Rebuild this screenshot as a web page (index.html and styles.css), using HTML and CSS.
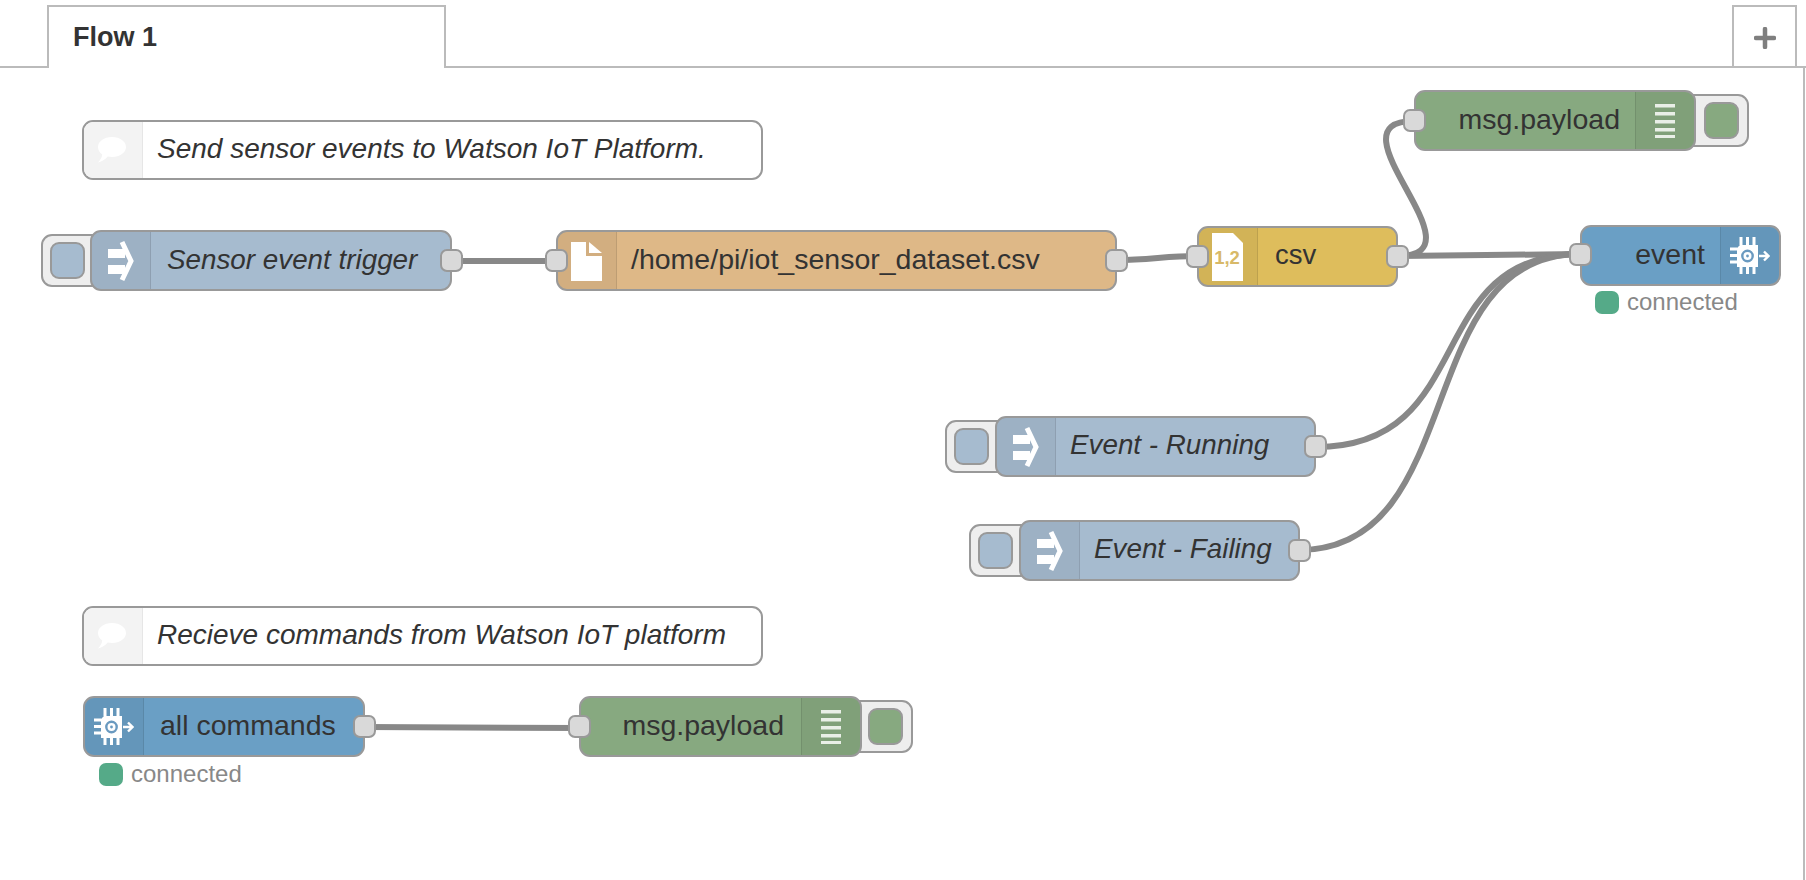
FILE: index.html
```html
<!DOCTYPE html>
<html lang="en">
    <head>
        <meta charset="UTF-8" />
        <title>Flow 1</title>
        <link rel="stylesheet" href="styles.css">
    </head>
    <body>
        <svg class="defs" width="0" height="0">
            <symbol id="icon-inject" viewBox="0 0 26 46">
                <rect x="0" y="11" width="17" height="9" fill="#fff" />
                <rect x="0" y="27" width="17" height="9" fill="#fff" />
                <path d="M14 4 L23 23 L14 42" fill="none" stroke="#fff" stroke-width="5" />
            </symbol>
            <symbol id="icon-file" viewBox="0 0 31 39">
                <path d="M0 0 H15 V14 H31 V39 H0 Z" fill="#fff" />
                <path d="M18 0 L31 11 H18 Z" fill="#fff" />
            </symbol>
            <symbol id="icon-debug" viewBox="0 0 20 34">
                <g fill="#e9efe7">
                    <rect y="0" width="20" height="3.5" />
                    <rect y="8" width="20" height="3.5" />
                    <rect y="16" width="20" height="3.5" />
                    <rect y="24" width="20" height="3.5" />
                    <rect y="31" width="20" height="3" />
                </g>
            </symbol>
            <symbol id="icon-chip" viewBox="0 0 40 37">
                <g fill="#fff">
                    <path d="M10 8 H28 V30 H7 V11 Z" />
                    <rect x="9.500" y="0" width="3" height="8" />
                    <rect x="16" y="0" width="3" height="8" />
                    <rect x="22.500" y="0" width="3" height="8" />
                    <rect x="9.500" y="30" width="3" height="7" />
                    <rect x="16" y="30" width="3" height="7" />
                    <rect x="22.500" y="30" width="3" height="7" />
                    <rect x="0" y="10.500" width="7" height="3" />
                    <rect x="0" y="17" width="7" height="3" />
                    <rect x="0" y="23.500" width="7" height="3" />
                </g>
                <circle cx="17.500" cy="19" r="5.200" fill="none" stroke="#6a9ac0" stroke-width="2.400" />
                <circle cx="17.500" cy="19" r="1.400" fill="#6a9ac0" />
                <path d="M29 19 H38 M34 14.500 L38.500 19 L34 23.500" fill="none" stroke="#fff" stroke-width="2.400" />
            </symbol>
            <symbol id="icon-comment" viewBox="0 0 28 26">
                <path d="M14 0 C22 0 28 4.500 28 10 C28 15.500 22 20 14 20 C12.500 20 11 19.800 9.800 19.500 C7 22.500 3 25 0 25.500 C2.500 23 4 20 4.300 17.500 C1.600 15.700 0 13 0 10 C0 4.500 6 0 14 0 Z" fill="#fff" />
            </symbol>
        </svg>

        <div class="tabs">
            <div class="tab">Flow 1</div>
            <div class="tab-add">
                <svg width="22" height="22" viewBox="0 0 22 22">
                    <path d="M11 2 V20 M2 11 H20" fill="none" stroke="#7f7f7f" stroke-width="4.500" stroke-linecap="round" />
                </svg>
            </div>
        </div>

        <div class="canvas">
            <svg class="wires" width="1803" height="812" viewBox="0 68 1803 812">
                <path d="M451 261 L556 261" />
                <path d="M1116 260 C1150 260 1165 256 1197 256" />
                <path d="M1398 256 C1488 256 1324 121 1414 121" />
                <path d="M1398 256 C1450 256 1530 254 1580 254" />
                <path d="M1316 447 C1480 447 1420 254 1580 254" />
                <path d="M1299 550 C1470 550 1410 254 1580 254" />
                <path d="M365 727 L579 728" />
            </svg>

            <div class="node comment comment-send">
                <div class="icon-box"><svg class="icon-speech"><use href="#icon-comment" /></svg></div>
                <div class="label">Send sensor events to Watson IoT Platform.</div>
            </div>

            <div class="trigger trigger-sensor"><span></span></div>
            <div class="node inject inject-sensor">
                <div class="icon-box"><svg class="icon-arrow"><use href="#icon-inject" /></svg></div>
                <div class="label italic">Sensor event trigger</div>
                <i class="port port-out"></i>
            </div>

            <div class="node file">
                <i class="port port-in"></i>
                <div class="icon-box"><svg class="icon-doc"><use href="#icon-file" /></svg></div>
                <div class="label">/home/pi/iot_sensor_dataset.csv</div>
                <i class="port port-out"></i>
            </div>

            <div class="node csv">
                <i class="port port-in"></i>
                <div class="icon-box">
                    <svg class="icon-csv" viewBox="0 0 31 48">
                        <path d="M0 0 H21 L31 10 V48 H0 Z" fill="#fff" />
                        <text x="15" y="31" text-anchor="middle">1,2</text>
                    </svg>
                </div>
                <div class="label">csv</div>
                <i class="port port-out"></i>
            </div>

            <div class="trigger-right trigger-debug-top"><span></span></div>
            <div class="node debug debug-top">
                <i class="port port-in"></i>
                <div class="label">msg.payload</div>
                <div class="icon-box"><svg class="icon-bars"><use href="#icon-debug" /></svg></div>
            </div>

            <div class="node watson watson-out">
                <i class="port port-in"></i>
                <div class="label">event</div>
                <div class="icon-box"><svg class="icon-chip"><use href="#icon-chip" /></svg></div>
            </div>
            <div class="status status-event"><span class="dot"></span>connected</div>

            <div class="trigger trigger-running"><span></span></div>
            <div class="node inject inject-running">
                <div class="icon-box"><svg class="icon-arrow"><use href="#icon-inject" /></svg></div>
                <div class="label italic">Event - Running</div>
                <i class="port port-out"></i>
            </div>

            <div class="trigger trigger-failing"><span></span></div>
            <div class="node inject inject-failing">
                <div class="icon-box"><svg class="icon-arrow"><use href="#icon-inject" /></svg></div>
                <div class="label italic">Event - Failing</div>
                <i class="port port-out"></i>
            </div>

            <div class="node comment comment-receive">
                <div class="icon-box"><svg class="icon-speech"><use href="#icon-comment" /></svg></div>
                <div class="label">Recieve commands from Watson IoT platform</div>
            </div>

            <div class="node watson watson-in">
                <div class="icon-box"><svg class="icon-chip"><use href="#icon-chip" /></svg></div>
                <div class="label">all commands</div>
                <i class="port port-out"></i>
            </div>
            <div class="status status-commands"><span class="dot"></span>connected</div>

            <div class="trigger-right trigger-debug-bottom"><span></span></div>
            <div class="node debug debug-bottom">
                <i class="port port-in"></i>
                <div class="label">msg.payload</div>
                <div class="icon-box"><svg class="icon-bars"><use href="#icon-debug" /></svg></div>
            </div>
        </div>
    </body>
</html>
```

FILE: styles.css
```css
html,
body {
    margin: 0;
    height: 880px;
    overflow: hidden;
    background: #fff;
    color: #333;
    font-family: "Liberation Sans", Arial, sans-serif;
}
.defs {
    display: block;
    height: 0;
}

/* tab bar */
.tabs {
    display: flex;
    box-sizing: border-box;
    height: 68px;
    padding: 5px 9px 0 47px;
    border-bottom: 2px solid #bbb;
}
.tab {
    box-sizing: border-box;
    width: 399px;
    height: 63px;
    padding: 0 0 0 24px;
    border: 2px solid #bbb;
    border-bottom: none;
    background: #fff;
    font-size: 27px;
    font-weight: bold;
    line-height: 60px;
}
.tab-add {
    display: flex;
    box-sizing: border-box;
    align-items: center;
    justify-content: center;
    width: 65px;
    height: 61px;
    margin-left: auto;
    padding-top: 2px;
    border: 2px solid #bbb;
    border-bottom: none;
}

/* canvas, nodes sit at their diagram position, page y minus 68 */
.canvas {
    position: relative;
    box-sizing: border-box;
    width: 1805px;
    height: 812px;
    border-right: 2px solid #bbb;
}
.wires {
    position: absolute;
    left: 0;
    top: 0;
}
.wires path {
    fill: none;
    stroke: #888;
    stroke-width: 6;
}

.node {
    position: absolute;
    display: flex;
    box-sizing: border-box;
    align-items: center;
    height: 61px;
    border: 2px solid #999;
    border-radius: 11px;
    font-size: 28.5px;
}
.icon-box {
    display: flex;
    box-sizing: border-box;
    flex: none;
    align-self: stretch;
    align-items: center;
    justify-content: center;
    width: 59px;
    background: rgba(0, 0, 0, 0.05);
    border-right: 1px solid rgba(0, 0, 0, 0.1);
    border-radius: 9px 0 0 9px;
}
.label {
    flex: 1;
    padding: 0 17px 3px 14px;
    white-space: nowrap;
}
.italic {
    font-size: 27.8px;
    font-style: italic;
}

.port {
    position: absolute;
    z-index: 2;
    box-sizing: border-box;
    width: 23px;
    height: 23px;
    top: 17px;
    background: #d9d9d9;
    border: 2px solid #999;
    border-radius: 7px;
}
.port-in {
    left: -13px;
}
.port-out {
    right: -13px;
}

.inject {
    background: #a6bbcf;
}
.inject-sensor {
    left: 90px;
    top: 162px;
    width: 362px;
}
.inject-sensor .label {
    padding: 0 17px 1px 16px;
}
.inject-running {
    left: 995px;
    top: 348px;
    width: 321px;
}
.inject-failing {
    left: 1019px;
    top: 452px;
    width: 281px;
}

.file {
    left: 556px;
    top: 162px;
    width: 561px;
    background: #deb887;
}
.csv {
    left: 1197px;
    top: 158px;
    width: 201px;
    background: #debd5c;
}
.csv .label {
    padding-left: 17px;
    font-size: 27.5px;
}

.debug {
    background: #87a980;
}
.debug .label,
.watson-out .label {
    padding: 0 15px 3px 17px;
    text-align: right;
}
.debug-bottom .label {
    padding-right: 17px;
}
.debug .icon-box,
.watson-out .icon-box {
    border-right: none;
    border-left: 1px solid rgba(0, 0, 0, 0.1);
    border-radius: 0 9px 9px 0;
}
.debug-top {
    left: 1414px;
    top: 22px;
    width: 282px;
}
.debug-bottom {
    left: 579px;
    top: 628px;
    width: 283px;
}

.watson {
    background: #6a9fc5;
}
.watson-out {
    left: 1580px;
    top: 157px;
    width: 201px;
}
.watson-out .port {
    top: 16px;
}
.watson-in {
    left: 83px;
    top: 628px;
    width: 282px;
}
.watson-in .label {
    padding-left: 16px;
}

.comment {
    height: 60px;
    background: #fff;
    font-size: 28px;
    font-style: italic;
    width: 681px;
}
.comment .icon-box {
    background: #f3f3f3;
    border-right-color: #e6e6e6;
}
.comment-send {
    left: 82px;
    top: 52px;
}
.comment-receive {
    left: 82px;
    top: 538px;
}

/* the small button hanging off an inject or debug node */
.trigger,
.trigger-right {
    position: absolute;
    display: flex;
    box-sizing: border-box;
    align-items: center;
    height: 53px;
    background: #eee;
    border: 2px solid #999;
}
.trigger {
    width: 60px;
    padding-left: 7px;
    border-radius: 11px 0 0 11px;
}
.trigger-right {
    justify-content: flex-end;
    width: 60px;
    padding-right: 8px;
    border-radius: 0 11px 11px 0;
}
.trigger span,
.trigger-right span {
    box-sizing: border-box;
    width: 35px;
    height: 37px;
    border: 2px solid #999;
    border-radius: 9px;
}
.trigger span {
    background: #a6bbcf;
}
.trigger-right span {
    background: #87a980;
}
.trigger-sensor {
    left: 41px;
    top: 166px;
}
.trigger-running {
    left: 945px;
    top: 352px;
}
.trigger-failing {
    left: 969px;
    top: 456px;
}
.trigger-debug-top {
    left: 1689px;
    top: 26px;
}
.trigger-debug-bottom {
    left: 853px;
    top: 632px;
}

/* status under a node */
.status {
    position: absolute;
    display: flex;
    align-items: center;
    gap: 8px;
    color: #888;
    font-size: 24px;
    line-height: 24px;
}
.dot {
    width: 24px;
    height: 23px;
    background: #5a8;
    border-radius: 7px;
}
.status-event {
    left: 1595px;
    top: 222px;
}
.status-commands {
    left: 99px;
    top: 694px;
}

/* icons */
.icon-arrow {
    width: 26px;
    height: 46px;
    margin-right: 1px;
}
.icon-doc {
    width: 31px;
    height: 39px;
    margin: 1px 2px 0 0;
}
.icon-csv {
    width: 31px;
    height: 48px;
    margin-right: 2px;
}
.icon-csv text {
    fill: #d8b968;
    font-size: 18.500px;
    font-weight: bold;
}
.icon-bars {
    width: 20px;
    height: 34px;
}
.icon-chip {
    width: 40px;
    height: 37px;
}
.icon-speech {
    width: 28px;
    height: 26px;
    margin-right: 2px;
}
```
